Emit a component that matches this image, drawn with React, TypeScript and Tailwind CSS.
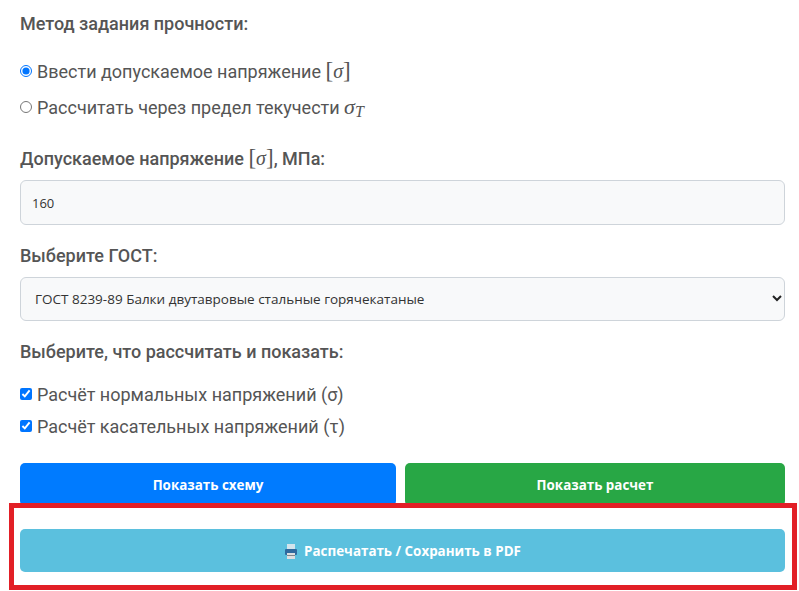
import React from "react";

const Sigma = ({ sub }: { sub?: boolean }) => (
  <span className={`font-['Liberation_Serif',serif] italic text-[#555] leading-[0] ${sub ? "text-[22px]" : "text-[20px]"}`}>
    σ
    {sub && <span className="text-[16px] relative top-[3px] leading-[0]">T</span>}
  </span>
);

const Bracket = () => (
  <span className="font-['Liberation_Serif',serif] text-[#555] text-[23px] font-normal leading-[0]">
    [<Sigma />]
  </span>
);

const Label = ({ children, className }: { children: React.ReactNode; className?: string }) => (
  <div className={`text-[18px] leading-[26px] font-medium text-[#555] ${className ?? ""}`}>
    {children}
  </div>
);

const Option = ({ type, checked, children, className }: { type: string; checked?: boolean; children: React.ReactNode; className?: string }) => (
  <label className={`flex items-center text-[18px] text-[#555] ${className ?? ""}`}>
    <input
      type={type}
      defaultChecked={checked}
      className="w-[12px] h-[12px] m-0 mr-[5px] accent-[#0075ff] shrink-0"
    />
    <span>{children}</span>
  </label>
);

const PrinterIcon = () => (
  <svg width="14" height="15" viewBox="0 0 14 15" className="mr-[6px]">
    <rect x="3" y="0" width="8" height="5" fill="#d3e4ec" />
    <rect x="1" y="5" width="12" height="6" rx="1" fill="#2f6a9e" />
    <rect x="3" y="9" width="8" height="6" fill="#dcdfe1" />
    <rect x="3" y="11" width="8" height="1" fill="#7f868c" />
  </svg>
);

export default function App() {
  return (
    <div className="relative w-[799px] h-[591px] overflow-hidden bg-white font-['Roboto',sans-serif] pl-[20px] pr-[14px] pt-[11px]">
      <Label>Метод задания прочности:</Label>

      <div className="mt-[16px] flex flex-col">
        <Option type="radio" checked className="h-[36px]">
          Ввести допускаемое напряжение <Bracket />
        </Option>
        <Option type="radio" className="h-[36px]">
          Рассчитать через предел текучести <Sigma sub />
        </Option>
      </div>

      <Label className="mt-[21px]">
        Допускаемое напряжение <Bracket />, МПа:
      </Label>

      <input
        readOnly
        value="160"
        className="mt-[8px] block w-full h-[45px] rounded-[6px] border border-[#ced4da] bg-[#f8f9fa] px-[11px] text-[13px] text-[#333] font-['Open_Sans',sans-serif]"
      />

      <Label className="mt-[18px]">Выберите ГОСТ:</Label>

      <div className="relative mt-[8px] w-full h-[44px] rounded-[6px] border border-[#ced4da] bg-[#f8f9fa] pl-[14px] flex items-center text-[13.5px] text-[#333] font-['Open_Sans',sans-serif]">
        ГОСТ 8239-89 Балки двутавровые стальные горячекатаные
        <svg width="12" height="12" viewBox="0 0 12 12" className="absolute right-[1px] top-[14px]">
          <path d="M2 4l4 4 4-4" fill="none" stroke="#222" strokeWidth="2" />
        </svg>
      </div>

      <Label className="mt-[18px]">Выберите, что рассчитать и показать:</Label>

      <div className="mt-[13px] flex flex-col">
        <Option type="checkbox" checked className="h-[32px]">
          Расчёт нормальных напряжений (σ)
        </Option>
        <Option type="checkbox" checked className="h-[32px]">
          Расчёт касательных напряжений (τ)
        </Option>
      </div>

      <div className="mt-[21px] flex gap-[9px] font-['Open_Sans',sans-serif]">
        <button className="w-[376px] h-[43px] pt-[1px] rounded-[5px] bg-[#007bff] text-white text-[13.4px] font-bold">
          Показать схему
        </button>
        <button className="w-[380px] h-[43px] pt-[1px] rounded-[5px] bg-[#28a745] text-white text-[13.4px] font-bold">
          Показать расчет
        </button>
      </div>

      <button className="mt-[23px] w-full h-[43px] pt-[1px] rounded-[5px] bg-[#5bc0de] text-white text-[13.4px] font-bold font-['Open_Sans',sans-serif] flex items-center justify-center">
        <PrinterIcon />
        Распечатать / Сохранить в PDF
      </button>

      {/* annotation frame drawn over the page */}
      <div className="absolute left-[9px] top-[503px] w-[788px] h-[87px] border-[5px] border-[#e21f26] pointer-events-none" />
    </div>
  );
}
